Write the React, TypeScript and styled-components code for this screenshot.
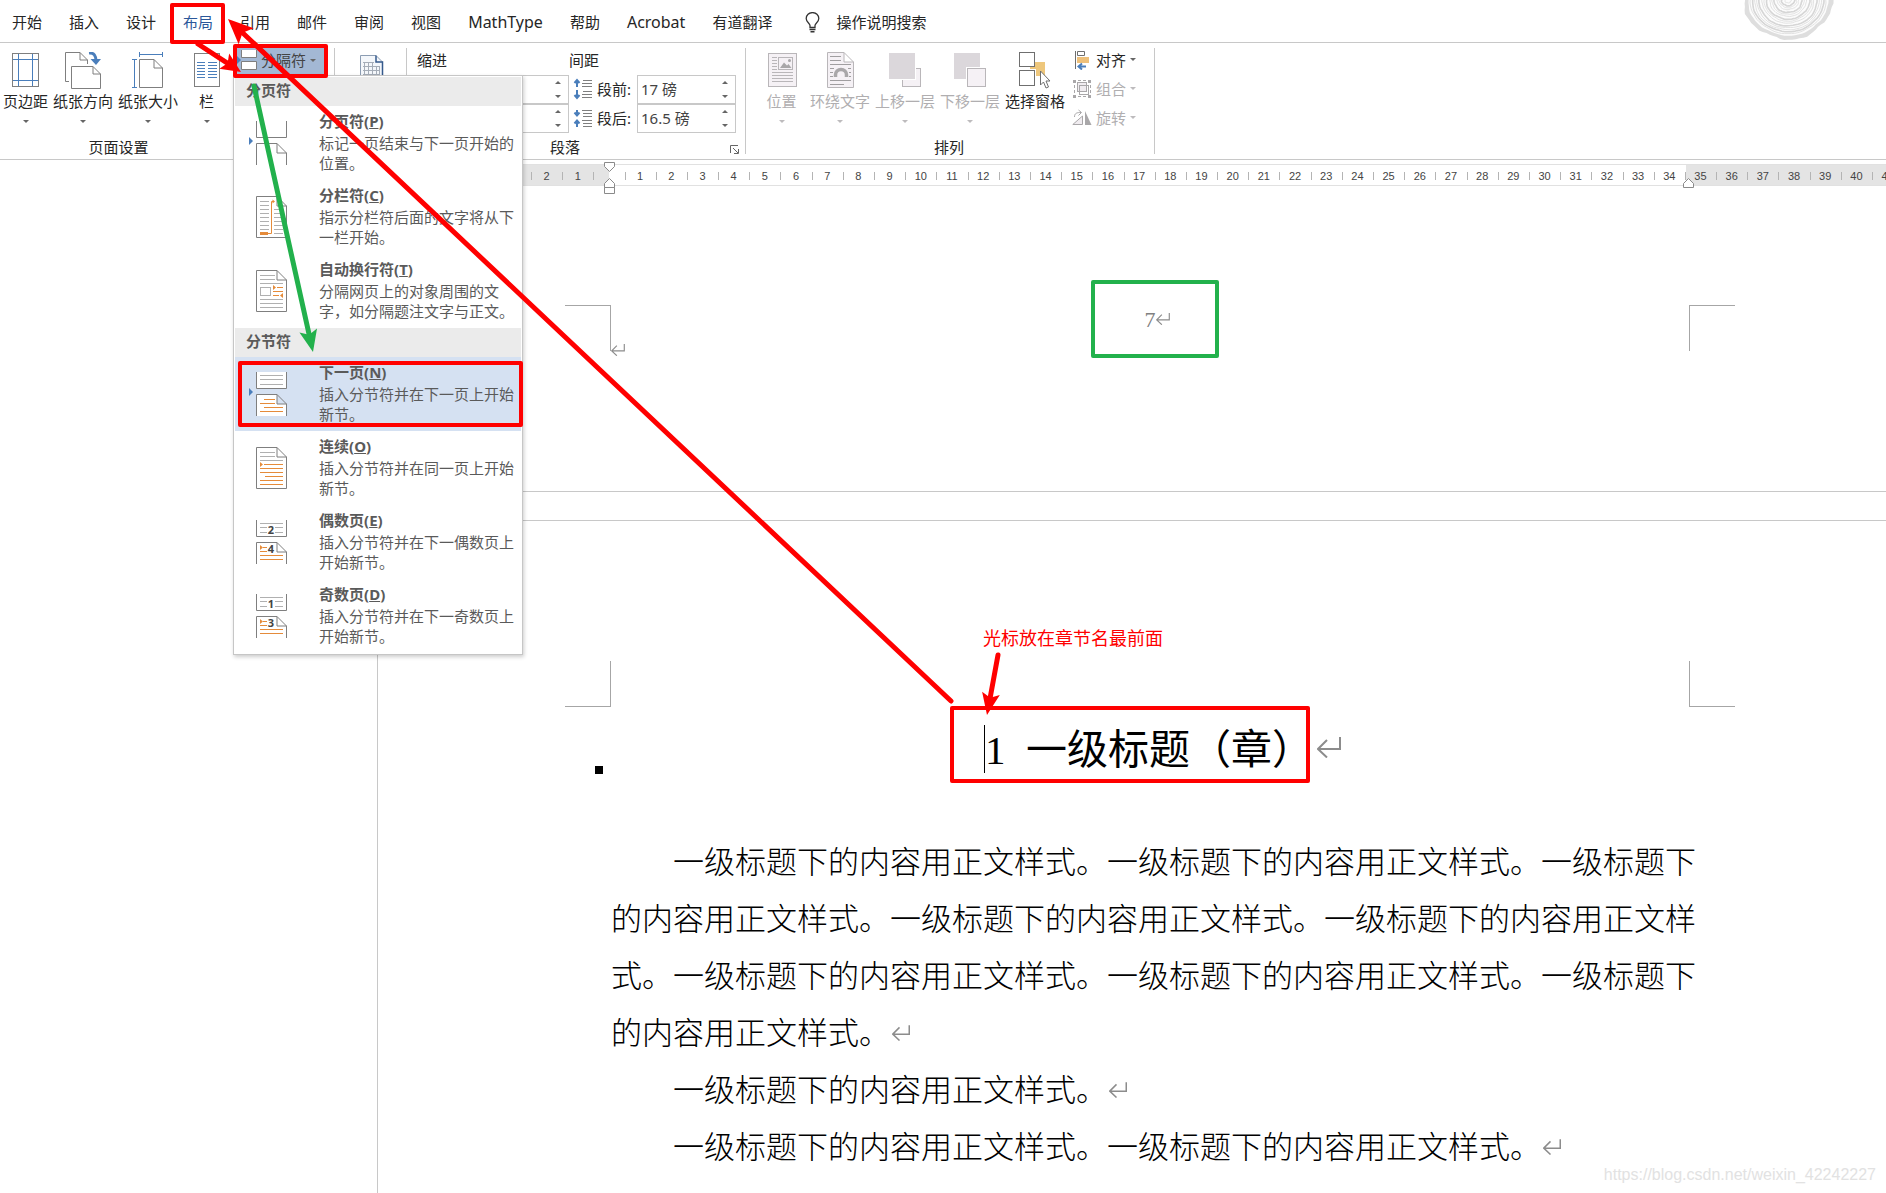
import React from 'react';
import styled, { createGlobalStyle, css } from 'styled-components';

const ui = `'Noto Sans', 'Noto Sans CJK SC', sans-serif`;
const line = '#c8c8c8';
const ink = '#262626';
const dim = '#b0aeb0';
const red = '#ff0000';
const green = '#22b14c';
const blue = '#4a7ebb';
const orange = '#e58b3a';

const Global = createGlobalStyle`
  *, *::before, *::after { box-sizing: border-box; }
  body { margin: 0; background: #fff; }
  button, input { font: inherit; color: inherit; }
  button { background: none; border: 0; padding: 0; cursor: default; }
`;

const Screen = styled.div`
  position: relative;
  display: flex;
  flex-direction: column;
  min-height: 100vh;
  overflow: hidden;
  font: 15px/20px ${ui};
  color: ${ink};
  background: #fff;
`;

/* ---------- Tab strip ---------- */

const TabStrip = styled.nav`
  position: relative;
  display: flex;
  align-items: center;
  gap: 27px;
  height: 43px;
  padding: 2px 12px 0;
  border-bottom: 1px solid ${line};
  white-space: nowrap;
`;

const Tab = styled.button<{ $active?: boolean; $latin?: boolean }>`
  color: ${(p) => (p.$active ? '#2b579a' : ink)};
  font-size: ${(p) => (p.$latin ? 16 : 15)}px;
`;

const Search = styled.button`
  display: flex;
  align-items: center;
  gap: 16px;
  margin-left: 6px;
`;

const TreeRings = styled.svg`
  position: absolute;
  top: 0;
  right: 50px;
`;

/* ---------- Ribbon ---------- */

const Ribbon = styled.div`
  display: flex;
  height: 117px;
  border-bottom: 1px solid ${line};
  padding: 3px 0 2px;
  white-space: nowrap;
`;

const Group = styled.section<{ $width: number; $left?: number }>`
  display: flex;
  flex-direction: column;
  flex: none;
  width: ${(p) => p.$width}px;
  padding-left: ${(p) => p.$left ?? 0}px;
`;

const GroupBody = styled.div`
  display: flex;
  gap: 1px;
  height: 91px;
`;

const GroupFooter = styled.div<{ $end?: number }>`
  display: flex;
  align-items: center;
  justify-content: center;
  height: 20px;
  padding-right: ${(p) => p.$end ?? 0}px;
`;

const Divider = styled.div`
  flex: none;
  width: 1px;
  margin: 2px 0 3px;
  background: ${line};
`;

const BigButton = styled.button<{ $min?: number; $off?: boolean }>`
  display: flex;
  flex-direction: column;
  align-items: center;
  min-width: ${(p) => p.$min ?? 0}px;
  padding: 6px 2px 0;
  color: ${(p) => (p.$off ? dim : ink)};

  svg:first-child { display: block; }
`;

const BigLabel = styled.span`
  margin: 2px 0 9px;
`;

const Caret = styled.i<{ $off?: boolean }>`
  width: 0;
  height: 0;
  border: 3px solid transparent;
  border-top-color: ${(p) => (p.$off ? '#bdbbbd' : '#666')};
  border-bottom: 0;
`;

const SmallColumn = styled.div`
  display: flex;
  flex-direction: column;
`;

const SmallButton = styled.button<{ $off?: boolean }>`
  display: flex;
  align-items: center;
  gap: 4px;
  height: 29px;
  padding: 0 4px 2px;
  color: ${(p) => (p.$off ? dim : ink)};
`;

const BreaksAnchor = styled.div`
  position: relative;
  width: 93px;
`;

const BreaksButton = styled.button`
  display: flex;
  align-items: center;
  gap: 4px;
  width: 100%;
  height: 30px;
  padding: 0 4px 2px;
  background: #a3b8d4;
  color: #444;
`;

const Fields = styled.div`
  display: grid;
  grid-template-columns: 152px 68px 99px;
  grid-template-rows: 29px 29px 29px;
  align-items: center;
`;

const FieldHead = styled.span<{ $wide?: boolean }>`
  padding-bottom: 2px;
  ${(p) => p.$wide && css`grid-column: span 2;`}
`;

const FieldLabel = styled.label`
  display: flex;
  align-items: center;
  gap: 4px;
  padding: 0 0 2px 4px;
`;

const SpinBox = styled.div`
  display: flex;
  justify-self: end;
  width: 99px;
  height: 29px;
  border: 1px solid ${line};
`;

const SpinInput = styled.input`
  flex: 1;
  min-width: 0;
  border: 0;
  outline: 0;
  padding: 0 0 2px 3px;
  background: transparent;
  color: #444;
`;

const SpinButtons = styled.div`
  display: flex;
  flex-direction: column;
  width: 20px;
`;

const SpinButton = styled.button<{ $up?: boolean }>`
  display: flex;
  flex: 1;
  align-items: center;
  justify-content: center;

  i { transform: ${(p) => (p.$up ? 'rotate(180deg)' : 'none')}; }
`;

/* ---------- Breaks menu ---------- */

const Menu = styled.div`
  position: absolute;
  z-index: 5;
  top: 29px;
  left: 0;
  width: 290px;
  padding: 1px;
  border: 1px solid #c6c6c6;
  background: #fff;
  box-shadow: 1px 2px 4px rgba(0, 0, 0, 0.2);
  color: #5a5a5a;
  white-space: normal;
`;

const MenuHeading = styled.div`
  height: 29px;
  padding-left: 11px;
  background: #ebebeb;
  line-height: 27px;
  font-weight: 600;
`;

const MenuItem = styled.button<{ $hot?: boolean }>`
  display: flex;
  width: 100%;
  height: 74px;
  text-align: left;
  background: ${(p) => (p.$hot ? '#d5e1f2' : 'transparent')};

  svg { flex: none; }
`;

const ItemText = styled.span`
  display: block;
  width: 197px;
  padding-top: 4px;
`;

const ItemTitle = styled.strong`
  display: block;
  margin-bottom: 1px;
  line-height: 22px;
  font-weight: 700;
`;

const ItemNote = styled.span`
  display: block;
`;

/* ---------- Ruler ---------- */

const RulerRow = styled.div`
  position: relative;
  margin-top: 4px;
`;

const RulerScale = styled.div`
  display: flex;
  height: 22px;
  margin: 0 -17px 0 375px;
  border: solid #e1e1e1;
  border-width: 1px 0;
  background: linear-gradient(
    90deg,
    #e4e4e4 234px,
    #fff 234px,
    #fff calc(100% - 217px),
    #e4e4e4 calc(100% - 217px)
  );
`;

const RulerCell = styled.span`
  display: flex;
  flex: 1 1 0;
  align-items: center;
  justify-content: center;
  min-width: 0;
  padding-top: 2px;
  color: #444;
  font: 11px/16px 'Liberation Sans', Arial, sans-serif;

  &::before {
    content: '';
    width: 1px;
    height: 8px;
    margin-right: auto;
    background: #b4b4b4;
  }

  &::after {
    content: '';
    width: 1px;
    margin-left: auto;
  }
`;

const IndentMarker = styled.svg`
  position: absolute;
  left: 603px;
  top: -2px;
`;

const RightMarker = styled.svg`
  position: absolute;
  right: 191px;
  top: 14px;
`;

/* ---------- Document ---------- */

const Sheet = styled.article<{ $first?: boolean }>`
  margin-left: 377px;
  padding: ${(p) => (p.$first ? '119px' : '140px')} 151px 0 187px;
  border-left: 1px solid ${line};
  ${(p) =>
    p.$first
      ? css`height: 306px; border-bottom: 1px solid ${line};`
      : css`flex: 1; margin-top: 28px; border-top: 1px solid ${line};`}
`;

const MarginRow = styled.div`
  display: grid;
  grid-template-columns: 46px 1fr 46px;
  grid-template-rows: 46px;
`;

const Crop = styled.span<{ $side: 'left' | 'right'; $edge: 'top' | 'bottom' }>`
  border: 0 solid #a6a6a6;
  ${(p) => (p.$side === 'left' ? 'border-right-width: 1px;' : 'border-left-width: 1px;')}
  ${(p) => (p.$edge === 'top' ? 'border-top-width: 1px;' : 'border-bottom-width: 1px;')}
`;

const FooterText = styled.div`
  display: flex;
  flex-direction: column;
  height: 51px;
  justify-content: space-between;
  color: #808080;
`;

const PageNumber = styled.span`
  position: relative;
  align-self: center;
  font: 22px/30px 'Liberation Serif', serif;

  svg { position: absolute; left: 100%; top: 8px; }
`;

const Title = styled.h1`
  position: relative;
  display: flex;
  justify-content: center;
  margin: 13px 48px 51px 46px;
  font: 400 41px/60px 'Liberation Serif', 'Noto Sans CJK SC', serif;
  color: #000;
  white-space: pre;

  &::before {
    content: '';
    position: absolute;
    left: -16px;
    top: 46px;
    width: 8px;
    height: 8px;
    background: #000;
  }
`;

const TitleText = styled.span`
  position: relative;

  &::before {
    content: '';
    position: absolute;
    left: -1px;
    top: 5px;
    width: 1px;
    height: 48px;
    background: #000;
  }

  svg { position: absolute; left: 100%; top: 17px; margin-left: 4px; }
`;

const Paragraph = styled.p`
  margin: 0 38px 0 46px;
  text-indent: 2em;
  font: 300 31px/57px 'Noto Sans CJK SC', serif;
  color: #000;

  svg { margin-left: 2px; vertical-align: 3px; }
`;

/* ---------- Overlays ---------- */

const Annotations = styled.svg`
  position: absolute;
  z-index: 10;
  top: 0;
  left: 0;
  pointer-events: none;
`;

const Callout = styled.span`
  position: absolute;
  z-index: 10;
  left: 983px;
  top: 626px;
  font-size: 18px;
  line-height: 24px;
  color: ${red};
`;

const Watermark = styled.span`
  position: absolute;
  right: 10px;
  bottom: 8px;
  font: 16px/20px 'Liberation Sans', Arial, sans-serif;
  color: #e2e2e2;
`;

/* ---------- Drawings ---------- */

const ReturnMark = ({ w }: { w: number }) => (
  <svg width={w} height={Math.round((w * 21) / 24)} viewBox="0 0 24 21" fill="none" stroke="#8c8c8c" strokeWidth="2">
    <path d="M23 0V12H1M10 3L1 12L10 20.500" />
  </svg>
);

const Bulb = () => (
  <svg width="15" height="21" viewBox="0 0 15 21" fill="none" stroke="#333" strokeWidth="1.300">
    <path d="M5 15.500V13.500C5 11.500 1.200 10 1.200 6.500A6.200 5.800 0 0 1 13.800 6.500C13.800 10 10 11.500 10 13.500V15.500Z" />
    <path d="M4.500 17.500H10.500M5.500 19.800H9.500" strokeWidth="1.600" />
  </svg>
);

const ringPath = (r: number, wob: number, phase: number) => {
  const pts: string[] = [];
  for (let i = 0; i <= 72; i++) {
    const a = (i / 72) * Math.PI * 2;
    const k = r + wob * (Math.sin(a * 5 + phase) + 0.6 * Math.sin(a * 11 + phase * 2) + 0.4 * Math.sin(a * 23));
    pts.push(`${(45 + k * 1.08 * Math.cos(a)).toFixed(1)} ${(k * 0.96 * Math.sin(a)).toFixed(1)}`);
  }
  return `M${pts.join('L')}Z`;
};

const Rings = () => (
  <TreeRings width="94" height="42" viewBox="-1 0 94 42" fill="none">
    <path d={ringPath(41, 0.9, 1)} fill="#dedede" />
    <path d={ringPath(37, 0.4, 1)} fill="#fcfcfc" />
    {[35, 33, 31, 29, 27, 24, 22, 20, 17, 15, 13, 10, 8, 6, 3].map((r, i) => (
      <path key={r} d={ringPath(r, 0.25, i)} stroke={i % 3 === 1 ? '#d6d6d6' : '#e2e2e2'} strokeWidth={i % 3 === 1 ? 1.6 : 1} />
    ))}
  </TreeRings>
);

const MarginsIcon = () => (
  <svg width="40" height="37" viewBox="0 0 40 37" fill="none">
    <rect x="6.500" y="1.500" width="26" height="33" stroke="#7f7f7f" />
    <path d="M12.500 2V34M26.500 2V34M7 7.500H32M7 28.500H32" stroke={blue} />
  </svg>
);

const OrientationIcon = () => (
  <svg width="40" height="37" viewBox="0 0 40 37" fill="none" stroke="#7f7f7f">
    <path d="M6 29.500H2.500V.5H17L24.500 8V12M17 .5V8H24.500" />
    <path d="M8.500 14.500H30L37.500 22V36.500H8.500ZM30 14.500V22H37.500" fill="#fff" />
    <path d="M26 1C31 .5 33 4 33 9" stroke={blue} strokeWidth="3" />
    <path d="M27.500 7L33 13L38 7Z" fill={blue} stroke="none" />
  </svg>
);

const SizeIcon = () => (
  <svg width="40" height="37" viewBox="0 0 40 37" fill="none">
    <path d="M11.500 7.500H26L34.500 16V35.500H11.500ZM26 7.500V16H34.500" stroke="#7f7f7f" />
    <path d="M12 2.500H34M11.500 0V5M34.500 0V5M6.500 8V35M4 7.500H9M4 35.500H9" stroke={blue} />
  </svg>
);

const ColumnsIcon = () => (
  <svg width="40" height="37" viewBox="0 0 40 37" fill="none">
    <rect x="7.500" y="1.500" width="25" height="33" stroke="#7f7f7f" />
    <path d="M10 10.500H18M10 13.500H18M10 16.500H18M10 19.500H18M10 22.500H18M10 25.500H18M21 10.500H30M21 13.500H30M21 16.500H30M21 19.500H30M21 22.500H30M21 25.500H30" stroke={blue} />
  </svg>
);

const BreaksIcon = () => (
  <svg width="20" height="20" viewBox="0 0 20 20">
    <path d="M0 6L4 10L0 14Z" fill={blue} />
    <path d="M4.500 0V7.500H19.500V0M4.500 19.500V11.500H19.500V19.500Z" fill="#fff" stroke="#7f7f7f" />
  </svg>
);

const GridPaperIcon = () => (
  <svg width="26" height="36" viewBox="0 -2 26 36" fill="none">
    <path d="M1.500 1.500H17L23.500 8V34.500H1.500Z" fill="#f4f7fb" stroke="#8c9db3" />
    <path d="M17 1.500V8H23.500V34" stroke="#355a8c" strokeWidth="1.500" />
    <path d="M4 8.500H15M4 12.500H21M4 16.500H21M4 20.500H21M5.500 8V24M9.500 8V24M13.500 8V24M17.500 12V24M20.500 12V24" stroke="#a5adb8" />
  </svg>
);

const PositionIcon = () => (
  <svg width="40" height="37" viewBox="0 0 40 37" fill="#f5f1f5" stroke="#b9b6b9">
    <rect x="6.500" y="1.500" width="28" height="33" />
    <path d="M10 5.500H15M10 8.500H15M10 11.500H15M10 14.500H15M10 17.500H15M10 20.500H31M10 23.500H31M10 26.500H31M10 29.500H31" />
    <rect x="16.500" y="5.500" width="14" height="12" />
    <path d="M18 16L22 10.500L25 13.500L26.500 12L29.500 16Z" fill="#a9a7a9" stroke="none" />
    <circle cx="27.500" cy="8.500" r="1.500" fill="#a9a7a9" stroke="none" />
  </svg>
);

const WrapIcon = () => (
  <svg width="40" height="37" viewBox="0 0 40 37" fill="none" stroke="#b9b6b9">
    <path d="M7.500 .5H24L33.500 10V35.500H7.500ZM24 .5V10H33.500" fill="#f5f1f5" />
    <path d="M10 4.500H21M10 8.500H21M10 12.500H31M10 16.500H14M28 16.500H31M10 20.500H13M29 20.500H31M10 24.500H13M29 24.500H31M10 28.500H31M10 32.500H24" stroke="#a09ea0" />
    <path d="M15.500 25V23A5.500 5.500 0 0 1 26.500 23V25" stroke="#a9a7a9" strokeWidth="3.500" />
  </svg>
);

const ForwardIcon = () => (
  <svg width="40" height="37" viewBox="0 0 40 37">
    <rect x="17.500" y="16.500" width="18" height="18" fill="#f5f1f5" stroke="#b9b6b9" />
    <rect x="3" y="0" width="28" height="28" fill="#fff" />
    <rect x="4" y="1" width="26" height="26" fill="#dbd7db" />
  </svg>
);

const BackwardIcon = () => (
  <svg width="40" height="37" viewBox="0 0 40 37">
    <rect x="4" y="1" width="26" height="26" fill="#dbd7db" />
    <rect x="16" y="15" width="21" height="21" fill="#fff" />
    <rect x="17.500" y="16.500" width="18" height="18" fill="#f5f1f5" stroke="#b9b6b9" />
  </svg>
);

const SelectionIcon = () => (
  <svg width="40" height="37" viewBox="0 0 40 37" stroke="#6f6f6f" fill="#fff">
    <path d="M15 10H30V24H21V17H15Z" fill="#eec77c" stroke="none" />
    <rect x="4.500" y=".5" width="15" height="14" />
    <rect x="4.500" y="18.500" width="15" height="15" />
    <path d="M25.500 19V33L28.500 30L31 36L33.500 35L31 29H35Z" />
  </svg>
);

const AlignIcon = () => (
  <svg width="20" height="20" viewBox="0 0 20 20" fill="none">
    <path d="M3.500 1V19M5.500 1.500H12.500V5.500H5.500Z" stroke="#6f6f6f" />
    <rect x="5" y="7" width="12" height="6" fill="#eec07a" />
    <path d="M14 16.500H7M10 13.500L6.500 16.500L10 19.500" stroke={blue} strokeWidth="2" />
  </svg>
);

const GroupIcon = () => (
  <svg width="20" height="20" viewBox="0 0 20 20" fill="#f0ecf0" stroke="#a9a7a9">
    <rect x="5.500" y="3.500" width="9" height="9" />
    <rect x="7.500" y="6.500" width="9" height="9" fill="none" />
    <path d="M1 1H4V4H1ZM16 1H19V4H16ZM1 16H4V19H1ZM16 16H19V19H16Z" fill="#a9a7a9" stroke="none" />
    <path d="M2.500 6V15M6 17.500H15M18.500 6V15M6 1.500H15" strokeDasharray="3 2" />
  </svg>
);

const RotateIcon = () => (
  <svg width="20" height="20" viewBox="0 0 20 20" fill="none" stroke="#a9a7a9">
    <path d="M.8 16.500H10.500V8Z" fill="#f0ecf0" />
    <path d="M13 3L19.500 17H13Z" fill="#a9a7a9" stroke="none" />
    <path d="M2.500 9C2.500 5 5 4.500 9 4.500M6.500 2L9.500 4.500L6.500 7.500" />
  </svg>
);

const SpacingIcon = ({ inward }: { inward?: boolean }) => (
  <svg width="20" height="22" viewBox="0 0 20 22" fill="none">
    <path
      d={
        inward
          ? 'M4 3V8M1.500 5.500L4 8.500L6.500 5.500M4 20V14M1.500 16.500L4 13.500L6.500 16.500'
          : 'M4 9V2M1.500 5L4 2L6.500 5M4 12V20M1.500 17L4 20L6.500 17'
      }
      stroke={blue}
      strokeWidth="2"
    />
    <path
      d={
        inward
          ? 'M9 3.500H19M10 6.500H19M10 9.500H19M9 13.500H19M10 16.500H19M10 19.500H19'
          : 'M10 2.500H19M9 5.500H19M9 8.500H19M10 13.500H19M9 16.500H19M9 19.500H19'
      }
      stroke="#7f7f7f"
    />
  </svg>
);

const Launcher = styled.svg`
  position: absolute;
  right: 2px;
  top: 7px;
`;

const FooterWithLauncher = styled.div`
  position: relative;
`;

type BreakKind = 'page' | 'column' | 'wrap' | 'next' | 'continuous' | 'even' | 'odd';

const folded = 'M21.500 16.500H42L51.500 26V57.500H21.500ZM42 16.500V26H51.500';
const halves = 'M21.500 15V31.500H51.500V15M21.500 59V37.500H42L51.500 47V59M42 37.500V47H51.500';

const BreakIcon = ({ kind }: { kind: BreakKind }) => {
  const split = kind === 'page' || kind === 'next' || kind === 'even' || kind === 'odd';
  return (
    <svg width="84" height="74" viewBox="0 0 84 74" fill="none">
      <path d={split ? halves : folded} fill="#fff" stroke="#7f7f7f" />
      {(kind === 'page' || kind === 'next') && <path d="M14 31L18 35L14 39Z" fill={blue} />}
      {kind === 'column' && (
        <>
          <path d="M25 21.500H34M25 25.500H34M25 29.500H34M25 33.500H34M25 37.500H34M25 41.500H34M25 45.500H34M25 49.500H34M39 29.500H48M39 33.500H48M39 37.500H48M39 41.500H48M39 45.500H48M39 49.500H48M39 53.500H48" stroke="#b0b0b0" />
          <rect x="25" y="52" width="8" height="3" fill={orange} />
          <path d="M33 53.500H36.500V21.500H39" stroke={orange} />
          <path d="M37.500 19.500L40 21.500L37.500 23.500Z" fill={orange} />
        </>
      )}
      {kind === 'wrap' && (
        <>
          <path d="M25 21.500H40M25 25.500H40M25 29.500H48M25 45.500H48M25 49.500H48M25 53.500H48" stroke="#b0b0b0" />
          <rect x="25.500" y="33.500" width="10" height="8" stroke="#b0b0b0" />
          <path d="M42 33.500H48M38 37.500H48M38 41.500H44" stroke={orange} />
          <path d="M38 31L41 33.500L38 36ZM48 39L45 41.500L48 44Z" fill={orange} />
        </>
      )}
      {kind === 'next' && (
        <>
          <path d="M25 18.500H48M25 22.500H48M25 27.500H48" stroke="#b0b0b0" />
          <path d="M29 42.500H40M25 46.500H40M29 50.500H48M25 54.500H48" stroke={orange} />
        </>
      )}
      {kind === 'continuous' && (
        <>
          <path d="M25 21.500H40M25 25.500H40M25 29.500H48" stroke="#b0b0b0" />
          <path d="M29 33.500H48M25 37.500H48M25 41.500H48M30 45.500H48M25 49.500H48M25 53.500H48" stroke={orange} />
          <path d="M25 31L28 33.500L25 36Z" fill={orange} />
        </>
      )}
      {(kind === 'even' || kind === 'odd') && (
        <>
          <path d="M25 18.500H48M25 22.500H32M25 27.500H32M40 22.500H48M40 27.500H48" stroke="#b0b0b0" />
          <path d="M28 42.500H32M25 46.500H32M25 50.500H48M25 54.500H48" stroke={orange} />
          <path d="M25 40L28 42.500L25 45Z" fill={orange} />
          <text x="36" y="29" textAnchor="middle" fontSize="11" fontWeight="700" fill="#444">{kind === 'even' ? 2 : 1}</text>
          <text x="36" y="48" textAnchor="middle" fontSize="11" fontWeight="700" fill="#444">{kind === 'even' ? 4 : 3}</text>
        </>
      )}
    </svg>
  );
};

type ArrowProps = { from: [number, number]; to: [number, number]; color: string; len?: number; half?: number; w?: number };

const Arrow = ({ from, to, color, len = 22, half = 9, w = 5 }: ArrowProps) => {
  const d = Math.hypot(to[0] - from[0], to[1] - from[1]);
  const ux = (to[0] - from[0]) / d;
  const uy = (to[1] - from[1]) / d;
  const at = (back: number, side: number) => `${to[0] - ux * back - uy * side},${to[1] - uy * back + ux * side}`;
  return (
    <g>
      <line x1={from[0]} y1={from[1]} x2={to[0] - ux * len * 0.7} y2={to[1] - uy * len * 0.7} stroke={color} strokeWidth={w} strokeLinecap="round" />
      <polygon points={[at(0, 0), at(len, half), at(len * 0.8, 0), at(len, -half)].join(' ')} fill={color} />
    </g>
  );
};

/* ---------- Content ---------- */

const tabs = ['开始', '插入', '设计', '布局', '引用', '邮件', '审阅', '视图', 'MathType', '帮助', 'Acrobat', '有道翻译'];

type Entry = { kind: BreakKind; name: string; key: string; note: string; hot?: boolean };

const pageBreaks: Entry[] = [
  { kind: 'page', name: '分页符', key: 'P', note: '标记一页结束与下一页开始的位置。' },
  { kind: 'column', name: '分栏符', key: 'C', note: '指示分栏符后面的文字将从下一栏开始。' },
  { kind: 'wrap', name: '自动换行符', key: 'T', note: '分隔网页上的对象周围的文字，如分隔题注文字与正文。' },
];

const sectionBreaks: Entry[] = [
  { kind: 'next', name: '下一页', key: 'N', note: '插入分节符并在下一页上开始新节。', hot: true },
  { kind: 'continuous', name: '连续', key: 'O', note: '插入分节符并在同一页上开始新节。' },
  { kind: 'even', name: '偶数页', key: 'E', note: '插入分节符并在下一偶数页上开始新节。' },
  { kind: 'odd', name: '奇数页', key: 'D', note: '插入分节符并在下一奇数页上开始新节。' },
];

const sentence = '一级标题下的内容用正文样式。';

const rulerNumbers = Array.from({ length: 49 }, (_, i) => Math.abs(i - 7));

const Entries = ({ items }: { items: Entry[] }) => (
  <>
    {items.map((e) => (
      <MenuItem key={e.key} role="menuitem" $hot={e.hot}>
        <BreakIcon kind={e.kind} />
        <ItemText>
          <ItemTitle>{e.name}(<u>{e.key}</u>)</ItemTitle>
          <ItemNote>{e.note}</ItemNote>
        </ItemText>
      </MenuItem>
    ))}
  </>
);

const Big = ({ icon, label, min, off, plain }: { icon: React.ReactNode; label: string; min?: number; off?: boolean; plain?: boolean }) => (
  <BigButton $min={min} $off={off}>
    {icon}
    <BigLabel>{label}</BigLabel>
    {!plain && <Caret $off={off} />}
  </BigButton>
);

const Spin = ({ id, name, value }: { id: string; name?: string; value: string }) => (
  <SpinBox>
    <SpinInput id={id} aria-label={name} defaultValue={value} />
    <SpinButtons>
      <SpinButton $up aria-label="+"><Caret /></SpinButton>
      <SpinButton aria-label="-"><Caret /></SpinButton>
    </SpinButtons>
  </SpinBox>
);

export default function App() {
  return (
    <Screen>
      <Global />
      <TabStrip>
        {tabs.map((t) => (
          <Tab key={t} $active={t === '布局'} $latin={/^[A-Z]/.test(t)}>{t}</Tab>
        ))}
        <Search>
          <Bulb />
          操作说明搜索
        </Search>
        <Rings />
      </TabStrip>

      <Ribbon>
        <Group $width={334} $left={1}>
          <GroupBody>
            <Big icon={<MarginsIcon />} label="页边距" />
            <Big icon={<OrientationIcon />} label="纸张方向" />
            <Big icon={<SizeIcon />} label="纸张大小" />
            <Big icon={<ColumnsIcon />} label="栏" min={51} />
            <BreaksAnchor>
              <BreaksButton aria-expanded="true">
                <BreaksIcon />
                分隔符
                <Caret />
              </BreaksButton>
              <Menu role="menu">
                <MenuHeading>分页符</MenuHeading>
                <Entries items={pageBreaks} />
                <MenuHeading>分节符</MenuHeading>
                <Entries items={sectionBreaks} />
              </Menu>
            </BreaksAnchor>
          </GroupBody>
          <GroupFooter $end={98}>页面设置</GroupFooter>
        </Group>
        <Divider />
        <Group $width={71} $left={22}>
          <GroupBody>
            <BigButton aria-label="稿纸设置">
              <GridPaperIcon />
            </BigButton>
          </GroupBody>
        </Group>
        <Divider />
        <Group $width={338} $left={10}>
          <GroupBody>
            <Fields>
              <FieldHead>缩进</FieldHead>
              <FieldHead $wide>间距</FieldHead>
              <Spin id="indent-left" name="左" value="" />
              <FieldLabel htmlFor="space-before"><SpacingIcon />段前:</FieldLabel>
              <Spin id="space-before" value="17 磅" />
              <Spin id="indent-right" name="右" value="" />
              <FieldLabel htmlFor="space-after"><SpacingIcon inward />段后:</FieldLabel>
              <Spin id="space-after" value="16.5 磅" />
            </Fields>
          </GroupBody>
          <FooterWithLauncher>
            <GroupFooter $end={32}>段落</GroupFooter>
            <Launcher width="14" height="12" viewBox="0 0 14 12" fill="none" stroke="#666">
              <path d="M1.500 9V1.500H9M4 4L9 9M9.500 5V9.500H5" />
            </Launcher>
          </FooterWithLauncher>
        </Group>
        <Divider />
        <Group $width={408} $left={10}>
          <GroupBody>
            <Big icon={<PositionIcon />} label="位置" min={51} off />
            <Big icon={<WrapIcon />} label="环绕文字" off />
            <Big icon={<ForwardIcon />} label="上移一层" off />
            <Big icon={<BackwardIcon />} label="下移一层" off />
            <Big icon={<SelectionIcon />} label="选择窗格" plain />
            <SmallColumn>
              <SmallButton><AlignIcon />对齐<Caret /></SmallButton>
              <SmallButton $off><GroupIcon />组合<Caret $off /></SmallButton>
              <SmallButton $off><RotateIcon />旋转<Caret $off /></SmallButton>
            </SmallColumn>
          </GroupBody>
          <GroupFooter $end={12}>排列</GroupFooter>
        </Group>
        <Divider />
      </Ribbon>

      <RulerRow>
        <RulerScale>
          {rulerNumbers.map((n, i) => (
            <RulerCell key={i}>{n || ''}</RulerCell>
          ))}
        </RulerScale>
        <IndentMarker width="13" height="32" viewBox="0 0 13 32" fill="#fff" stroke="#8a8a8a">
          <path d="M1.500 .5H11.500V4.500L6.500 9.500L1.500 4.500Z" />
          <path d="M1.500 25.500V21.500L6.500 16.500L11.500 21.500V25.500ZM1.500 25.500H11.500V31.500H1.500Z" />
        </IndentMarker>
        <RightMarker width="13" height="11" viewBox="0 0 13 11" fill="#fff" stroke="#8a8a8a">
          <path d="M1.500 9.500V5.500L6.500 .5L11.500 5.500V9.500Z" />
        </RightMarker>
      </RulerRow>

      <Sheet $first>
        <MarginRow>
          <Crop $side="left" $edge="top" />
          <FooterText>
            <PageNumber>7<ReturnMark w={14} /></PageNumber>
            <ReturnMark w={14} />
          </FooterText>
          <Crop $side="right" $edge="top" />
        </MarginRow>
      </Sheet>
      <Sheet>
        <MarginRow>
          <Crop $side="left" $edge="bottom" />
          <span />
          <Crop $side="right" $edge="bottom" />
        </MarginRow>
        <Title>
          <TitleText>{'1  一级标题（章）'}<ReturnMark w={24} /></TitleText>
        </Title>
        <Paragraph>{sentence.repeat(8)}<ReturnMark w={18} /></Paragraph>
        <Paragraph>{sentence}<ReturnMark w={18} /></Paragraph>
        <Paragraph>{sentence.repeat(2)}<ReturnMark w={18} /></Paragraph>
      </Sheet>

      <Watermark>https://blog.csdn.net/weixin_42242227</Watermark>
      <Callout>光标放在章节名最前面</Callout>
      <Annotations width="1886" height="1193" viewBox="0 0 1886 1193" fill="none">
        <g stroke={red} strokeWidth="4" strokeLinejoin="round">
          <rect x="172" y="5" width="51" height="37" />
          <rect x="235" y="46" width="91" height="30" />
          <rect x="240" y="363" width="281" height="62" />
          <rect x="952" y="708" width="356" height="73" />
        </g>
        <rect x="1093" y="282" width="124" height="74" stroke={green} strokeWidth="4" strokeLinejoin="round" />
        <Arrow from={[198, 44]} to={[241, 72]} color={red} len={20} half={9} />
        <Arrow from={[951, 701]} to={[228, 19]} color={red} len={25} half={11} />
        <Arrow from={[998, 655]} to={[987, 715]} color={red} />
        <Arrow from={[254, 86]} to={[313, 352]} color={green} />
      </Annotations>
    </Screen>
  );
}
